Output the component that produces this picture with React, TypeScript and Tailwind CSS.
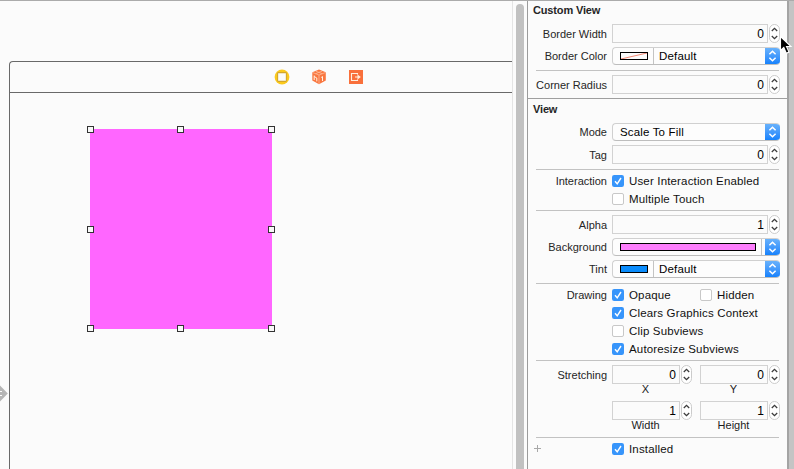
import type { ReactNode } from "react";

function Row({ label, className = "", children }: { label?: string; className?: string; children: ReactNode }) {
  return (
    <div className={`flex items-center ${className}`}>
      <div className="mr-[5px] w-[79px] shrink-0 whitespace-nowrap py-px text-right text-[11px] leading-[14px] text-[#262626]">
        {label}
      </div>
      {children}
    </div>
  );
}

function Stepper() {
  return (
    <svg className="ml-px shrink-0" width="11" height="19" viewBox="0 0 11 19" fill="none">
      <rect x="0.5" y="0.5" width="10" height="18" rx="5" fill="#fff" stroke="#cbcbcb" />
      <path d="M2.8 7 5.5 4.3 8.2 7M2.8 12 5.5 14.7 8.2 12" stroke="#3c3c3c" strokeWidth="1.3" />
    </svg>
  );
}

function Field({ value, width }: { value: string; width: string }) {
  return (
    <>
      <div className={`h-[19px] ${width} shrink-0 border border-[#d2d2d2] bg-[#fbfbfb] pr-[3px] pt-px text-right text-[12px] leading-[17px] text-black`}>
        {value}
      </div>
      <Stepper />
    </>
  );
}

function Popup({ children }: { children: ReactNode }) {
  return (
    <div className="flex h-[18px] w-[168px] shrink-0 overflow-hidden rounded-[4px] border border-r-0 border-[#d0d0d0] border-b-[#bdbdbd] bg-[#fdfdfd]">
      <div className="flex min-w-0 flex-1 items-center">{children}</div>
      <div className="-my-px flex w-[15px] items-center justify-center bg-linear-to-b from-[#6cb4fb] to-[#087ffc]">
        <svg width="9" height="14" viewBox="0 0 9 14" fill="none" stroke="#fff" strokeWidth="1.5">
          <path d="M1.4 5.3 4.5 2.2 7.6 5.3M1.4 8.7 4.5 11.8 7.6 8.7" />
        </svg>
      </div>
    </div>
  );
}

function PopupText({ children, className }: { children: ReactNode; className: string }) {
  return (
    <span className={`whitespace-nowrap py-px text-[11.5px] leading-[14px] tracking-[0.16px] text-black ${className}`}>
      {children}
    </span>
  );
}

function Check({ label, on = false, className = "" }: { label: string; on?: boolean; className?: string }) {
  return (
    <div className={`flex items-center ${className}`}>
      {on ? (
        <svg className="shrink-0" width="12" height="12" viewBox="0 0 12 12" fill="none">
          <rect width="12" height="12" rx="2.2" fill="#3795fb" />
          <path d="M3 6.3 5.2 8.8 9 3" stroke="#fff" strokeWidth="1.4" />
        </svg>
      ) : (
        <div className="size-[12px] shrink-0 rounded-[2px] border border-[#c8c8c8] bg-white" />
      )}
      <span className="ml-[5px] whitespace-nowrap text-[11.5px] leading-[12px] tracking-[0.16px] text-[#111]">{label}</span>
    </div>
  );
}

function Divider({ className = "" }: { className?: string }) {
  return <div className={`ml-[8px] h-px w-[243px] shrink-0 bg-[#c2c2c2] ${className}`} />;
}

function Heading({ children, className = "" }: { children: ReactNode; className?: string }) {
  return (
    <div className={`ml-[5px] h-[14px] text-[11px] font-bold leading-[14px] tracking-[-0.15px] text-[#262626] ${className}`}>
      {children}
    </div>
  );
}

function Captions({ left, right }: { left: string; right: string }) {
  return (
    <div className="ml-[84px] flex h-[12px] text-center text-[11px] leading-[10px] text-[#1c1c1c]">
      <span className="w-[67px]">{left}</span>
      <span className="ml-[21px] w-[67px]">{right}</span>
    </div>
  );
}

function DefaultColor({ children }: { children: ReactNode }) {
  return (
    <>
      <div className="ml-[7px] h-[8px] w-[28px] border border-black">{children}</div>
      <div className="ml-[5px] h-full w-px bg-[#c4c4c4]" />
      <PopupText className="ml-[5px]">Default</PopupText>
    </>
  );
}

function Inspector() {
  return (
    <aside className="flex w-[259px] shrink-0 flex-col bg-[#fbfbfb]">
      <Heading className="mt-[2px]">Custom View</Heading>
      <Row label="Border Width" className="mt-[7px] h-[19px]"><Field value="0" width="w-[156px]" /></Row>
      <Row label="Border Color" className="mt-[4px] h-[18px]">
        <Popup>
          <DefaultColor>
            <svg width="26" height="6" viewBox="0 0 26 6"><path d="M0 6 26 0" stroke="#f06a50" strokeWidth="0.8" /></svg>
          </DefaultColor>
        </Popup>
      </Row>
      <Divider className="mt-[5px]" />
      <Row label="Corner Radius" className="mt-[4px] h-[19px]"><Field value="0" width="w-[156px]" /></Row>
      <div className="mt-[4px] h-px shrink-0 bg-[#9f9f9f]" />
      <Heading className="mt-[3px]">View</Heading>
      <Row label="Mode" className="mt-[7px] h-[18px]">
        <Popup><PopupText className="ml-[7px]">Scale To Fill</PopupText></Popup>
      </Row>
      <Row label="Tag" className="mt-[4px] h-[19px]"><Field value="0" width="w-[156px]" /></Row>
      <Divider className="mt-[5px]" />
      <Row label="Interaction" className="mt-[5px] h-[12px]"><Check on label="User Interaction Enabled" /></Row>
      <Row className="mt-[6px] h-[12px]"><Check label="Multiple Touch" /></Row>
      <Divider className="mt-[5px]" />
      <Row label="Alpha" className="mt-[4px] h-[19px]"><Field value="1" width="w-[156px]" /></Row>
      <Row label="Background" className="mt-[4px] h-[18px]">
        <Popup>
          <div className="ml-[7px] h-[8px] w-[136px] border border-black bg-[#fd7efd]" />
          <div className="ml-[5px] h-full w-px bg-[#c4c4c4]" />
        </Popup>
      </Row>
      <Row label="Tint" className="mt-[4px] h-[18px]">
        <Popup><DefaultColor><div className="h-full bg-[#0a8cfc]" /></DefaultColor></Popup>
      </Row>
      <Divider className="mt-[5px]" />
      <Row label="Drawing" className="mt-[5px] h-[12px]">
        <Check on label="Opaque" className="w-[88px]" />
        <Check label="Hidden" />
      </Row>
      <Row className="mt-[6px] h-[12px]"><Check on label="Clears Graphics Context" /></Row>
      <Row className="mt-[6px] h-[12px]"><Check label="Clip Subviews" /></Row>
      <Row className="mt-[6px] h-[12px]"><Check on label="Autoresize Subviews" /></Row>
      <Divider className="mt-[5px]" />
      <Row label="Stretching" className="mt-[4px] h-[19px]">
        <Field value="0" width="w-[68px]" />
        <div className="w-[8px]" />
        <Field value="0" width="w-[68px]" />
      </Row>
      <Captions left="X" right="Y" />
      <Row className="mt-[5px] h-[19px]">
        <Field value="1" width="w-[68px]" />
        <div className="w-[8px]" />
        <Field value="1" width="w-[68px]" />
      </Row>
      <Captions left="Width" right="Height" />
      <Divider className="mt-[5px]" />
      <div className="mt-[5px] flex h-[12px] items-center">
        <svg className="-mt-px ml-[6px] mr-[71px]" width="7" height="7" viewBox="0 0 7 7"><path d="M0 3.5H7M3.5 0V7" stroke="#a8a8a8" /></svg>
        <Check on label="Installed" />
      </div>
    </aside>
  );
}

const handles = [
  "left-[-3px] top-[-3px]", "left-[87px] top-[-3px]", "left-[178px] top-[-3px]",
  "left-[-3px] top-[97px]", "left-[178px] top-[97px]",
  "left-[-3px] top-[196px]", "left-[87px] top-[196px]", "left-[178px] top-[196px]",
];

function Canvas() {
  return (
    <main className="relative flex w-[512px] shrink-0 flex-col bg-[#fbfbfb] pl-[9px] pt-[60px]">
      <div className="flex-1 rounded-tl-[4px] border-l border-t border-[#696969]">
        <div className="flex h-[31px] items-center gap-[22px] border-b border-[#696969] pl-[264px]">
          <svg width="16" height="16" viewBox="0 0 16 16">
            <circle cx="8" cy="8" r="7.4" fill="#fbc91b" />
            <rect x="3.6" y="3.6" width="8.8" height="8.8" rx="0.6" fill="#fbfbf7" stroke="#d3a62a" strokeWidth="1.1" />
          </svg>
          <svg width="14" height="16" viewBox="0 0 14 16">
            <path d="M7 .6 13.8 3.2V11.5L7 15.3.3 11.5V3.2Z" fill="#f9763f" />
            <path d="M.5 3.5 7 6 13.5 3.5M7 6V15M3.6 2.1 10.2 4.7M10.2 2.1 3.6 4.7" fill="none" stroke="#ffc3a4" strokeWidth="0.7" />
            <path d="M2.2 6.5V11M2.2 7.5 4.8 9V12.4M9.2 8.5 10.5 7.5V12" fill="none" stroke="#fff0df" strokeWidth="1" />
          </svg>
          <svg width="16" height="16" viewBox="0 0 16 16">
            <rect x="1" y="1" width="14" height="14" fill="#f9703b" />
            <path d="M9.5 5.5V4.5H3.5V11.5H9.5V10.5" fill="none" stroke="#fff0df" strokeWidth="1.1" />
            <path d="M7 8H11" stroke="#fff0df" strokeWidth="1" />
            <path d="M9.5 5.4 12.8 8 9.5 10.6Z" fill="#fff0df" />
          </svg>
        </div>
        <div className="relative ml-[80px] mt-[36px] h-[200px] w-[182px] bg-[#ff66ff]">
          {handles.map((position) => (
            <div key={position} className={`absolute size-[7px] border border-[#333] bg-[#f8f8f8] ${position}`} />
          ))}
        </div>
      </div>
      <svg className="absolute left-0 top-[384px]" width="8" height="17" viewBox="0 0 8 17">
        <path d="M0 .5 7.8 8.5 0 16.5Z" fill="#b5b5b5" />
        <path d="M0 6.5H2M0 10.5H2" stroke="#fbfbfb" />
      </svg>
    </main>
  );
}

export default function App() {
  return (
    <div className="relative flex h-[469px] w-[794px] overflow-hidden border-t border-[#ababab] bg-[#fbfbfb] font-['Liberation_Sans',Arial,sans-serif]">
      <Canvas />
      <div className="flex w-[15px] shrink-0 justify-center border-l border-[#e4e4e4] pt-[3px]">
        <div className="w-[8px] rounded-t-full bg-[#c1c1c1]" />
      </div>
      <div className="w-px shrink-0 bg-[#9b9b9b]" />
      <Inspector />
      <div className="w-[7px] shrink-0 border-l-2 border-[#a4a4a4] bg-[#c4c4c4]" />
      <svg className="absolute left-[779px] top-[34px]" width="14" height="20" viewBox="0 0 14 20">
        <path d="M1.5 1.5V15.5L4.8 12.5 7.3 18.3 10 17.1 7.5 11.5H12Z" fill="#000" stroke="#fff" strokeWidth="1.1" />
      </svg>
    </div>
  );
}
